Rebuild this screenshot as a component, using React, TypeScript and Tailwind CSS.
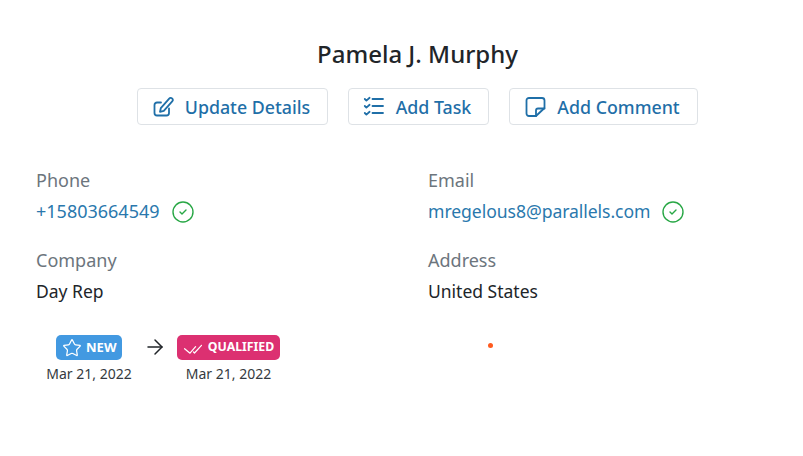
import { ArrowRight, CircleCheck, Star } from "lucide-react";

const fontStack = "font-['Noto_Sans',sans-serif]";

function PenIcon({ className }: { className?: string }) {
  return (
    <svg viewBox="0 0 22 22" fill="none" stroke="currentColor" strokeWidth="1.8" strokeLinecap="round" strokeLinejoin="round" className={className}>
      <path d="M9 6.5H5a2.5 2.5 0 0 0-2.5 2.5v8A2.5 2.5 0 0 0 5 19.5h9.5A2.5 2.5 0 0 0 17 17v-4.5" />
      <path d="M8 15.8l.8-3.6L17.2 2.6a2 2 0 0 1 3 2.7l-8.4 9.5z" />
    </svg>
  );
}

function TaskIcon({ className }: { className?: string }) {
  return (
    <svg viewBox="0 0 22 22" fill="none" stroke="currentColor" strokeWidth="1.8" strokeLinecap="round" strokeLinejoin="round" className={className}>
      <path d="M1.8 3l1.6 1.6L6.6 1.8M1.8 10l1.6 1.6 3.2-2.8M1.8 17l1.6 1.6 3.2-2.8" />
      <path d="M9.5 3h10.5M9.5 10h10.5M9.5 17h10.5" />
    </svg>
  );
}

function NoteIcon({ className }: { className?: string }) {
  return (
    <svg viewBox="0 0 22 22" fill="none" stroke="currentColor" strokeWidth="1.8" strokeLinecap="round" strokeLinejoin="round" className={className}>
      <path d="M5 2h13a2.5 2.5 0 0 1 2.5 2.5V12L12 20H5a2.5 2.5 0 0 1-2.5-2.5v-13A2.5 2.5 0 0 1 5 2z" />
      <path d="M12 20v-5.5a2 2 0 0 1 2-2h6.5" />
    </svg>
  );
}

function DoubleCheck({ className }: { className?: string }) {
  return (
    <svg viewBox="0 0 18 14" fill="none" stroke="currentColor" strokeWidth="1.2" strokeLinecap="round" strokeLinejoin="round" className={className}>
      <path d="M.6 7.7L6 12.2l5.6-6.6" />
      <path d="M9.5 11l1 1L17.5 4.3" />
    </svg>
  );
}

const actions = [
  { label: "Update Details", icon: PenIcon, width: "w-[191px]" },
  { label: "Add Task", icon: TaskIcon, width: "w-[141px]" },
  { label: "Add Comment", icon: NoteIcon, width: "w-[189px]" },
];

function Field({ label, children }: { label: string; children: React.ReactNode }) {
  return (
    <div className="h-[50px]">
      <div className="text-[18px] leading-[24px] text-[#6c757d]">{label}</div>
      <div className="mt-[7px] flex items-center text-[17.5px] leading-[24px] text-[#212529]">{children}</div>
    </div>
  );
}

function Verified() {
  return <CircleCheck className="-mb-[1px] ml-[11px] mt-[1px] h-[24px] w-[24px] text-[#28a745]" strokeWidth={1.4} />;
}

export default function App() {
  return (
    <div className={`h-[456px] w-[803px] bg-white pl-[36px] pr-[4px] pt-[38px] ${fontStack}`}>
      <h1 className="text-center text-[24px] font-medium leading-[32px] text-[#212529]">Pamela J. Murphy</h1>

      <div className="mt-[18px] flex justify-center gap-[20px]">
        {actions.map(({ label, icon: Icon, width }) => (
          <button
            key={label}
            className={`flex h-[37px] items-center justify-center gap-[11px] rounded-[4px] border border-[#dee2e6] bg-white pr-[3px] text-[17.8px] font-medium text-[#1f6fa8] ${width}`}
          >
            <Icon className="h-[22px] w-[22px]" />
            <span className="pt-[1px]">{label}</span>
          </button>
        ))}
      </div>

      <div className="mt-[43px] grid grid-cols-[392px_1fr] gap-y-[30px]">
        <Field label="Phone">
          <span className="text-[18px] text-[#2a78ad]">+15803664549</span>
          <Verified />
        </Field>
        <Field label="Email">
          <span className="text-[17.6px] tracking-[-0.07px] text-[#2a78ad]">mregelous8@parallels.com</span>
          <Verified />
        </Field>
        <Field label="Company">Day Rep</Field>
        <Field label="Address">United States</Field>
      </div>

      <div className="mt-[37px] grid grid-cols-[392px_1fr]">
        <div className="flex items-start">
          <div className="flex w-[106px] flex-col items-center">
            <span className="flex h-[25px] items-center gap-[4.5px] rounded-[5px] bg-[#4299e1] pl-[6px] pr-[6px] text-[13px] font-bold text-white">
              <Star className="h-[20px] w-[20px]" strokeWidth={1.5} />
              NEW
            </span>
            <span className="mt-[4px] text-[14px] leading-[20px] text-[#343a40]">Mar 21, 2022</span>
          </div>
          <ArrowRight className="ml-[1px] h-[24px] w-[24px] text-[#212529]" strokeWidth={1.5} />
          <div className="ml-[10px] flex w-[103px] flex-col items-center">
            <span className="flex h-[25px] items-center gap-[6px] rounded-[5px] bg-[#dc3071] pl-[7px] pr-[6px] text-[12.3px] font-bold text-white">
              <DoubleCheck className="h-[14px] w-[18px]" />
              QUALIFIED
            </span>
            <span className="mt-[4px] text-[14px] leading-[20px] text-[#343a40]">Mar 21, 2022</span>
          </div>
        </div>
        <div className="pl-[60px] pt-[8px]">
          <div className="h-[5px] w-[5px] rounded-full bg-[#ff5a1f]" />
        </div>
      </div>
    </div>
  );
}
